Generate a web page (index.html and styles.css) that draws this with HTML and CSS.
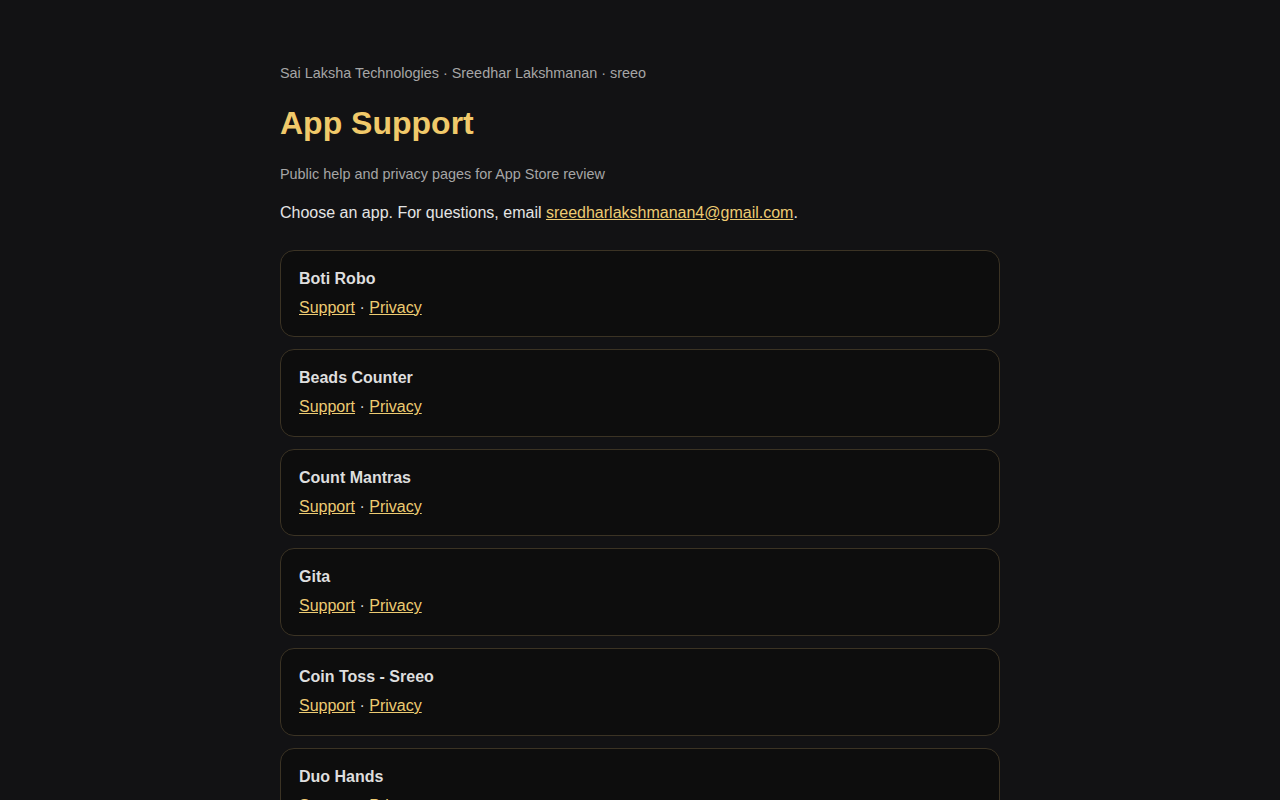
FILE: index.html
```html
<!DOCTYPE html>
<html lang="en">
<head>
  <meta charset="UTF-8" />
  <meta name="viewport" content="width=device-width, initial-scale=1.0"/>
  <title>App Support</title>
  <link rel="stylesheet" href="styles.css">
</head>
<body>

  <main class="container">
    <p class="meta">Sai Laksha Technologies · Sreedhar Lakshmanan · sreeo</p>
    <h1>App Support</h1>
    <p class="subtitle">Public help and privacy pages for App Store review</p>
    <p class="intro">Choose an app. For questions, email <a href="mailto:sreedharlakshmanan4@gmail.com">sreedharlakshmanan4@gmail.com</a>.</p>

    <div class="apps">
      <div class="card">
        <h2>Boti Robo</h2>
        <p class="links"><a href="#">Support</a> · <a href="#">Privacy</a></p>
      </div>
      <div class="card">
        <h2>Beads Counter</h2>
        <p class="links"><a href="#">Support</a> · <a href="#">Privacy</a></p>
      </div>
      <div class="card">
        <h2>Count Mantras</h2>
        <p class="links"><a href="#">Support</a> · <a href="#">Privacy</a></p>
      </div>
      <div class="card">
        <h2>Gita</h2>
        <p class="links"><a href="#">Support</a> · <a href="#">Privacy</a></p>
      </div>
      <div class="card">
        <h2>Coin Toss - Sreeo</h2>
        <p class="links"><a href="#">Support</a> · <a href="#">Privacy</a></p>
      </div>
      <div class="card">
        <h2>Duo Hands</h2>
        <p class="links"><a href="#">Support</a> · <a href="#">Privacy</a></p>
      </div>
    </div>
  </main>

</body>
</html>
```

FILE: styles.css
```css
* {
  margin: 0;
  padding: 0;
  box-sizing: border-box;
}

body, html {
  background: #121214;
  color: #e4e4e4;
  font-family: 'Liberation Sans', Arial, sans-serif;
  line-height: 1.5;
}

.container {
  max-width: 720px;
  margin: 0 auto;
  padding: 63px 0 40px;
}

.meta {
  font-size: 14.4px;
  color: #a6a6a6;
}

h1 {
  font-size: 32px;
  line-height: 1.2;
  color: #f0c96a;
  margin-top: 19px;
}

.subtitle {
  font-size: 14.4px;
  color: #a6a6a6;
  margin-top: 22px;
}

.intro {
  font-size: 16px;
  margin-top: 15px;
}

a {
  color: #edcb72;
}

.apps {
  display: flex;
  flex-direction: column;
  gap: 12px;
  margin-top: 25px;
}

.card {
  background: #0d0d0d;
  border: 1px solid #3b3324;
  border-radius: 14px;
  padding: 16px 18px;
  min-height: 87.6px;
}

.card h2 {
  font-size: 16px;
  color: #dedede;
}

.links {
  font-size: 16px;
  color: #d4d4d4;
  margin-top: 5px;
}
```
